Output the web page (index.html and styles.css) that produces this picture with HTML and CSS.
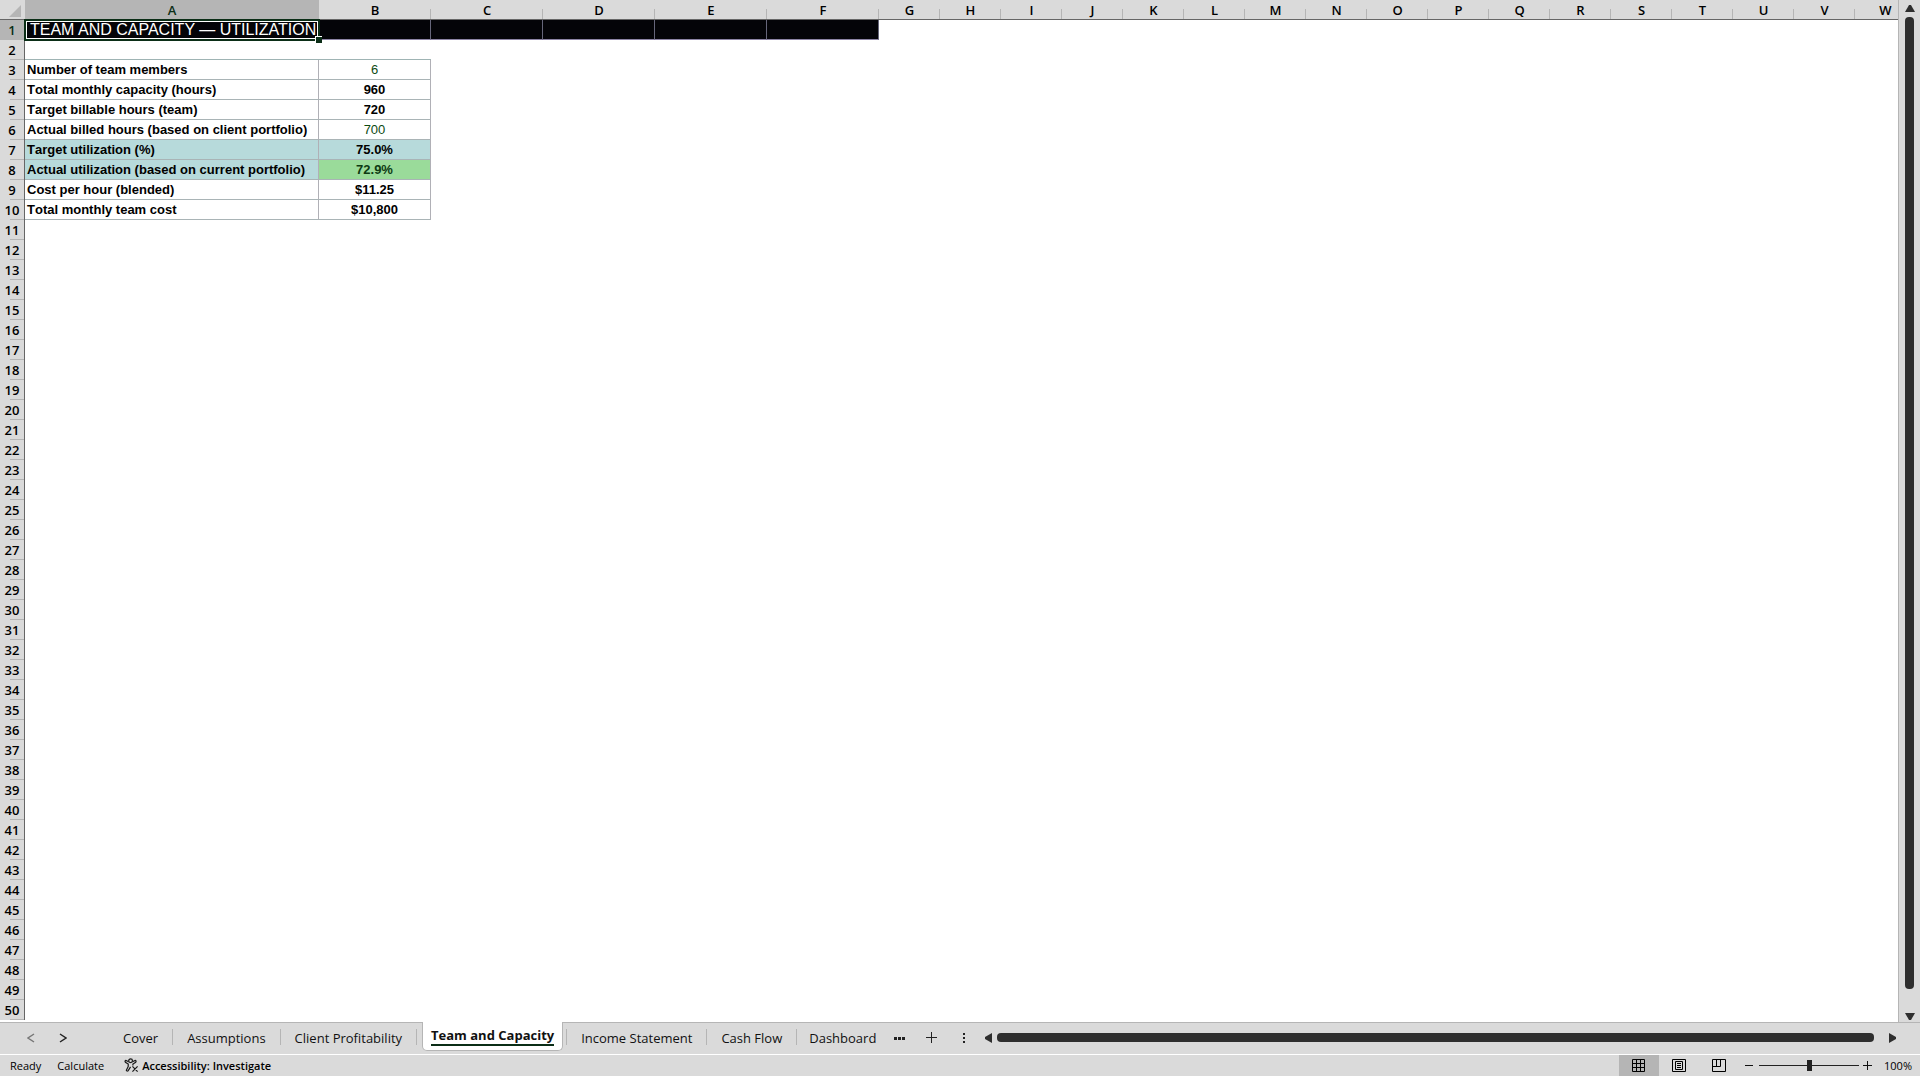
FILE: index.html
```
<!DOCTYPE html>
<html lang="en">
<head>
<meta charset="UTF-8">
<meta name="viewport" content="width=device-width, initial-scale=1.0">
<title>Team and Capacity</title>
<link rel="stylesheet" href="styles.css">
</head>
<body>
<main class="workspace">
  <div class="sheet">
    <table class="grid" id="grid">
      <thead>
        <tr id="columns"><th class="corner"><svg width="12" height="12" viewBox="0 0 12 12"><path d="M12 0V12H0Z" fill="#b5b5b5"/></svg></th></tr>
      </thead>
      <tbody id="rows"></tbody>
    </table>
  </div>
  <div class="vscroll">
    <button class="arrow" aria-label="Scroll up"><svg width="10" height="8" viewBox="0 0 10 8"><path d="M4 1H6L10 8H0Z"/></svg></button>
    <div class="vtrack"><div class="vthumb"></div></div>
    <button class="arrow" aria-label="Scroll down"><svg width="10" height="8" viewBox="0 0 10 8"><path d="M0 0H10L6 7H4Z"/></svg></button>
  </div>
</main>

<nav class="tabbar">
  <button class="nav-btn prev" aria-label="Previous sheet"><svg width="8" height="10" viewBox="0 0 8 10"><path d="M7 1L1 5L7 9"/></svg></button>
  <button class="nav-btn next" aria-label="Next sheet"><svg width="8" height="10" viewBox="0 0 8 10"><path d="M1 1L7 5L1 9"/></svg></button>
  <div class="tabs">
    <a class="tab" href="#">Cover</a>
    <a class="tab" href="#">Assumptions</a>
    <a class="tab" href="#">Client Profitability</a>
    <a class="tab active" href="#"><span>Team and Capacity</span></a>
    <a class="tab" href="#">Income Statement</a>
    <a class="tab" href="#">Cash Flow</a>
    <a class="tab last" href="#">Dashboard</a>
  </div>
  <button class="tool" aria-label="More sheets"><svg width="12" height="12" viewBox="0 0 12 12"><path d="M0 5h3v3H0zM4 5h3v3H4zM8 5h3v3H8z"/></svg></button>
  <button class="tool" aria-label="New sheet"><svg width="12" height="12" viewBox="0 0 12 12"><path d="M5 0h1v5h5v1H6v5H5V6H0V5h5z"/></svg></button>
  <button class="tool" aria-label="Resize"><svg width="12" height="12" viewBox="0 0 12 12"><path d="M5 1h2v2H5zM5 5h2v2H5zM5 9h2v2H5z"/></svg></button>
  <div class="hscroll">
    <button class="arrow" aria-label="Scroll left"><svg width="8" height="10" viewBox="0 0 8 10"><path d="M7 0V10L0 6V4Z"/></svg></button>
    <div class="hthumb"></div>
    <button class="arrow" aria-label="Scroll right"><svg width="8" height="10" viewBox="0 0 8 10"><path d="M0 0L7 4V6L0 10Z"/></svg></button>
  </div>
</nav>

<footer class="status">
  <span class="state">Ready</span>
  <span class="state">Calculate</span>
  <button class="access">
    <svg width="15" height="15" viewBox="0 0 16 16" fill="none" stroke="#1a1a1a" stroke-width="1.3"><circle cx="7" cy="3" r="2"/><path d="M5 4L2 2.500Q0.500 3 1.500 4.500L4.500 6.500V9L2.500 13Q3 14.500 4.500 13.500L7 9.500M9 4L12 2.500Q13.500 3 12.500 4.500L9.500 6.500V8M9 9L14.500 14.500M14.500 9L9 14.500"/></svg>
    Accessibility: Investigate
  </button>
  <div class="views">
    <button class="view on" aria-label="Normal"><svg width="14" height="14" viewBox="0 0 14 14"><path d="M.5.5h12v12H.5zM.5 4.500h12M.5 8.500h12M4.500.5v12M8.500.5v12"/></svg></button>
    <button class="view" aria-label="Page layout"><svg width="14" height="14" viewBox="0 0 14 14"><path d="M.5.5h13v12H.5zM3.500 2.500h7v8h-7zM5 4.500h4M5 6.500h4M5 8.500h4"/></svg></button>
    <button class="view" aria-label="Page break preview"><svg width="14" height="14" viewBox="0 0 14 14"><path d="M.5.5h13v12H.5zM.5 7.500h8M4.500.5v7M8.500.5v7"/></svg></button>
  </div>
  <div class="zoom">
    <button class="step" aria-label="Zoom out"><svg width="9" height="9" viewBox="0 0 9 9"><path d="M0 4.500h8"/></svg></button>
    <input type="range" min="10" max="190" value="100" aria-label="Zoom">
    <button class="step" aria-label="Zoom in"><svg width="9" height="9" viewBox="0 0 9 9"><path d="M0 4.500h9M4.500 0v9"/></svg></button>
    <span class="percent">100%</span>
  </div>
</footer>

<script src="sheet.js"></script>
</body>
</html>
```
FILE: styles.css
```
* {
    box-sizing: border-box;
}
body {
    margin: 0;
    height: 100vh;
    display: flex;
    flex-direction: column;
    overflow: hidden;
    background-color: #dadada;
    color: #000;
    font-family: "Open Sans", "Noto Sans", sans-serif;
    font-size: 13px;
}
button {
    display: flex;
    align-items: center;
    justify-content: center;
    padding: 0;
    border: 0;
    background: none;
    color: inherit;
    font: inherit;
}
svg {
    display: block;
}

/* grid */
.workspace {
    flex: 1;
    min-height: 0;
    display: flex;
}
.sheet {
    flex: 1;
    min-width: 0;
    overflow: hidden;
    background-color: #fff;
    border-right: 1px solid #b5b5b5;
}
.grid {
    width: 1916px;
    table-layout: fixed;
    border-collapse: separate;
    border-spacing: 0;
}
.grid th,
.grid td {
    height: 20px;
    padding: 0;
    line-height: 19px;
    white-space: nowrap;
}
.grid th {
    background-color: #dadada;
    font-weight: 600;
    text-align: center;
}
.grid thead th {
    padding-top: 2px;
    line-height: 17px;
    border-bottom: 1px solid #666;
    background-image: linear-gradient(#b5b5b5, #b5b5b5);
    background-repeat: no-repeat;
    background-size: 1px 10px;
    background-position: right bottom;
    width: 61px;
}
.grid thead th.corner {
    width: 25px;
    background-image: none;
}
.corner svg {
    margin-left: 9px;
}
.grid thead th.wide {
    width: 294px;
}
.grid thead th.mid {
    width: 112px;
}
.grid tbody th {
    padding-top: 1px;
    border-right: 1px solid #666;
    background-image: linear-gradient(#b5b5b5, #b5b5b5);
    background-repeat: no-repeat;
    background-size: 14px 1px;
    background-position: right bottom;
}
.grid th.selected {
    background-color: #b5b5b5;
    color: #0b2e17;
}
.grid td {
    font-family: "Liberation Sans", Arial, sans-serif;
}
.grid td.title {
    position: relative;
    padding-left: 5px;
    background-color: #040408;
    color: #fff;
    font-size: 16px;
    vertical-align: top;
}
.title::before {
    content: "";
    position: absolute;
    inset: -1px;
    border: 2px solid #0b2e17;
    box-shadow: inset 0 0 0 1px #fff;
}
.title::after {
    content: "";
    position: absolute;
    right: -3px;
    bottom: -3px;
    width: 6px;
    height: 6px;
    background-color: #0b2e17;
    border: solid #fff;
    border-width: 1px 0 0 1px;
}
.band {
    background-color: #040408;
    border-right: 1px solid #66667a;
    border-bottom: 1px solid #8c84a4;
}
.label,
.value {
    border-right: 1px solid #b0b0b6;
    border-bottom: 1px solid #a9b4b6;
}
.grid td.label {
    padding-left: 2px;
    font-weight: bold;
    font-kerning: none;
}
.value {
    text-align: center;
    font-weight: bold;
}
.top {
    border-bottom: 1px solid #9fb4b4;
}
.link {
    color: #0d4a12;
    font-weight: normal;
}
.teal {
    background-color: #b7dadb;
}
.good {
    background-color: #9adb9a;
    color: #0d3a12;
}

/* scroll bars */
.vscroll {
    width: 21px;
    padding: 4px 0 1px;
    display: flex;
    flex-direction: column;
    align-items: center;
}
.arrow {
    fill: #2e2e2e;
}
.vtrack {
    flex: 1;
    padding: 5px 0 24px;
}
.vthumb {
    width: 9px;
    height: 100%;
    border-radius: 4px;
    background-color: #2e2e2e;
}
.hscroll {
    flex: 1;
    display: flex;
    align-items: center;
    padding: 0 23px 0 5px;
}
.hthumb {
    flex: 1;
    height: 9px;
    margin: 0 15px 0 4px;
    border-radius: 4px;
    background-color: #2e2e2e;
}

/* sheet tabs */
.tabbar {
    height: 33px;
    display: flex;
    padding-bottom: 2px;
    border-top: 1px solid #b5b5b5;
    border-bottom: 1px solid #fff;
}
.nav-btn {
    width: 32px;
    fill: none;
    stroke: #222;
    stroke-width: 1.5;
}
.prev {
    margin-left: 15px;
    stroke: #777;
}
.tabs {
    display: flex;
    margin-left: 30px;
}
.tab {
    margin: 6px 0 7px;
    padding: 0 14px;
    border-right: 1px solid #b5b5b5;
    color: #111;
    font-size: 13px;
    line-height: 18px;
    text-decoration: none;
    white-space: nowrap;
}
.active {
    margin: -1px 3px 1px 5px;
    padding: 4px 8px 0;
    border: 1px solid #b5b5b5;
    border-top: 0;
    border-radius: 0 0 5px 5px;
    background-color: #fff;
    font-weight: bold;
}
.active span {
    display: block;
    border-bottom: 2px solid #0b2e17;
}
.active + .tab {
    border-left: 1px solid #b5b5b5;
}
.last {
    padding: 0 8px 0 12px;
    border-right: 0;
}
.tool {
    width: 32px;
    fill: #222;
}

/* status bar */
.status {
    height: 21px;
    display: flex;
    align-items: center;
    padding: 0 8px 0 10px;
    font-size: 11px;
    white-space: nowrap;
}
.state {
    margin-right: 16px;
}
.state + .access {
    margin-left: 4px;
}
.access {
    gap: 3px;
    font-weight: 600;
}
.views {
    display: flex;
    align-self: stretch;
    margin-left: auto;
}
.view {
    width: 40px;
    fill: none;
    stroke: #000;
}
.on {
    background-color: #b5b5b5;
}
.zoom {
    display: flex;
    align-items: center;
    margin-left: 6px;
}
.step {
    stroke: #111;
}
.zoom input {
    appearance: none;
    width: 100px;
    height: 11px;
    margin: 0 4px 0 5px;
    background: linear-gradient(#222, #222) center / 100% 1px no-repeat;
}
.zoom input::-webkit-slider-thumb {
    appearance: none;
    width: 5px;
    height: 11px;
    background-color: #222;
}
.percent {
    margin-left: 12px;
}
```
FILE: sheet.js
```
const columns = 'ABCDEFGHIJKLMNOPQRSTUVW'.split('');
const data = {
  3: ['Number of team members', '6', '', 'link'],
  4: ['Total monthly capacity (hours)', '960', '', ''],
  5: ['Target billable hours (team)', '720', '', ''],
  6: ['Actual billed hours (based on client portfolio)', '700', '', 'link'],
  7: ['Target utilization (%)', '75.0%', 'teal', 'teal'],
  8: ['Actual utilization (based on current portfolio)', '72.9%', 'teal', 'good'],
  9: ['Cost per hour (blended)', '$11.25', '', ''],
  10: ['Total monthly team cost', '$10,800', '', '']
};

const head = document.getElementById('columns');
columns.forEach((name, i) => {
  const th = document.createElement('th');
  th.textContent = name;
  if (i === 0) th.className = 'wide selected';
  else if (i < 6) th.className = 'mid';
  head.appendChild(th);
});

const body = document.getElementById('rows');
for (let r = 1; r <= 50; r++) {
  const row = body.insertRow();
  const th = document.createElement('th');
  th.textContent = r;
  if (r === 1) th.className = 'selected';
  row.appendChild(th);
  columns.forEach((name, i) => {
    const cell = row.insertCell();
    if (r === 1 && i === 0) {
      cell.className = 'title';
      cell.textContent = 'TEAM AND CAPACITY — UTILIZATION';
    } else if (r === 1 && i < 6) {
      cell.className = 'band';
    } else if (r === 2 && i < 2) {
      cell.className = 'top';
    } else if (data[r] && i < 2) {
      cell.className = (i ? 'value ' : 'label ') + data[r][i + 2];
      cell.textContent = data[r][i];
    }
  });
}
```
